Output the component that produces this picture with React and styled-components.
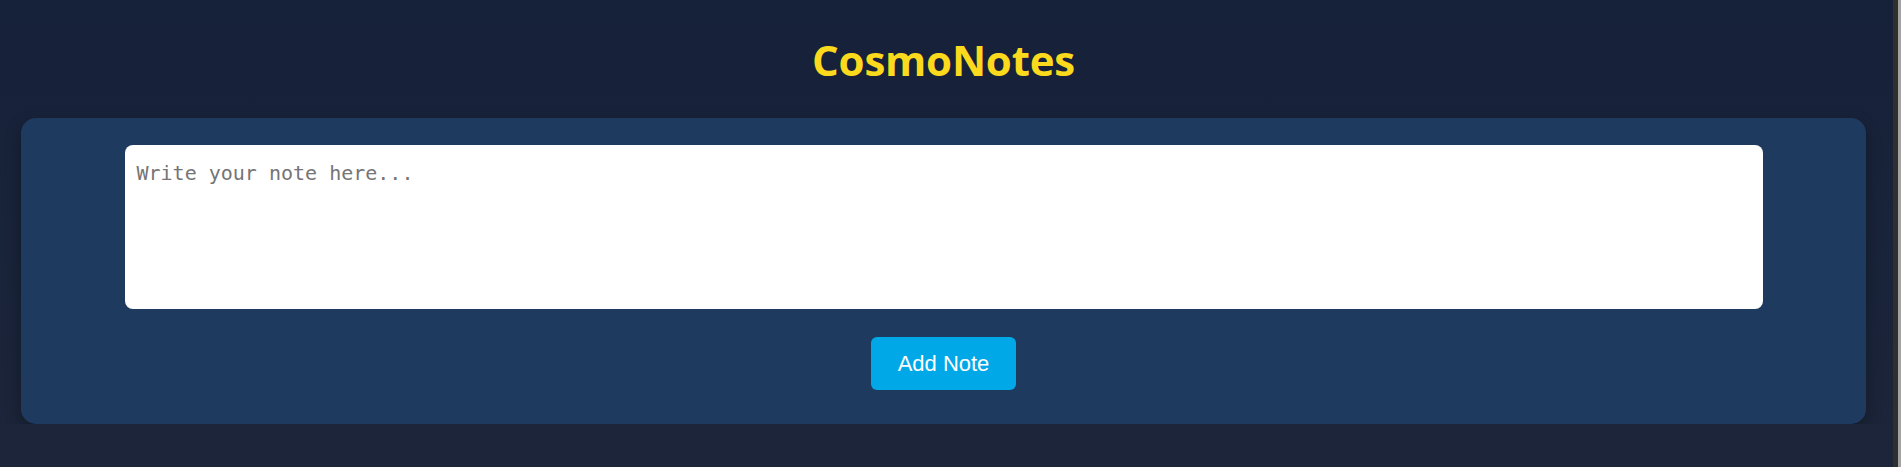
import styled, { createGlobalStyle } from "styled-components";

const GlobalStyle = createGlobalStyle`
  html {
    background:
      linear-gradient(to right, #2f2f2f 5px, #a3a3a3 5px) right top / 8px 100% no-repeat,
      linear-gradient(to bottom, #16213a 0%, #1c2539 100%);
    min-height: 100%;
  }
  body {
    margin: 0;
    font-family: "Open Sans", "Liberation Sans", sans-serif;
  }
`

const App = () => {
    return (<Page>
            <GlobalStyle />
            <Header>
                <Title>CosmoNotes</Title>
            </Header>
            <Card>
                <NoteInput placeholder="Write your note here..." />
                <AddButton>Add Note</AddButton>
            </Card>
        </Page>
    )
}

const Page = styled.div`
  padding: 0 35px 0 21px;
`

const Header = styled.header`
  padding: 35px 0 33px;
  display: flex;
  justify-content: center;
`

const Title = styled.h1`
  margin: 0;
  font-family: "Open Sans", sans-serif;
  font-weight: 700;
  font-size: 42px;
  line-height: 50px;
  color: #fbd91d;
  letter-spacing: -0.2px;
`

const Card = styled.section`
  display: flex;
  flex-direction: column;
  align-items: center;
  background: #1f3a5f;
  border-radius: 15px;
  padding: 27px 0 34px;
  box-shadow: 0 6px 16px rgba(0, 0, 0, 0.3);
`

const NoteInput = styled.textarea`
  box-sizing: border-box;
  width: calc(100% - 207px);
  height: 164px;
  border: none;
  border-radius: 8px;
  background: #ffffff;
  padding: 16px 12px;
  font-family: "DejaVu Sans Mono", monospace;
  font-size: 20px;
  color: #222;
  resize: none;
  outline: none;
  &::placeholder {
    color: #757575;
  }
`

const AddButton = styled.button`
  margin-top: 28px;
  height: 53px;
  padding: 0 27px;
  border: none;
  border-radius: 6px;
  background: #00a8e8;
  color: #ffffff;
  font-family: "Liberation Sans", Arial, sans-serif;
  font-size: 22px;
  cursor: pointer;
`

export default App
